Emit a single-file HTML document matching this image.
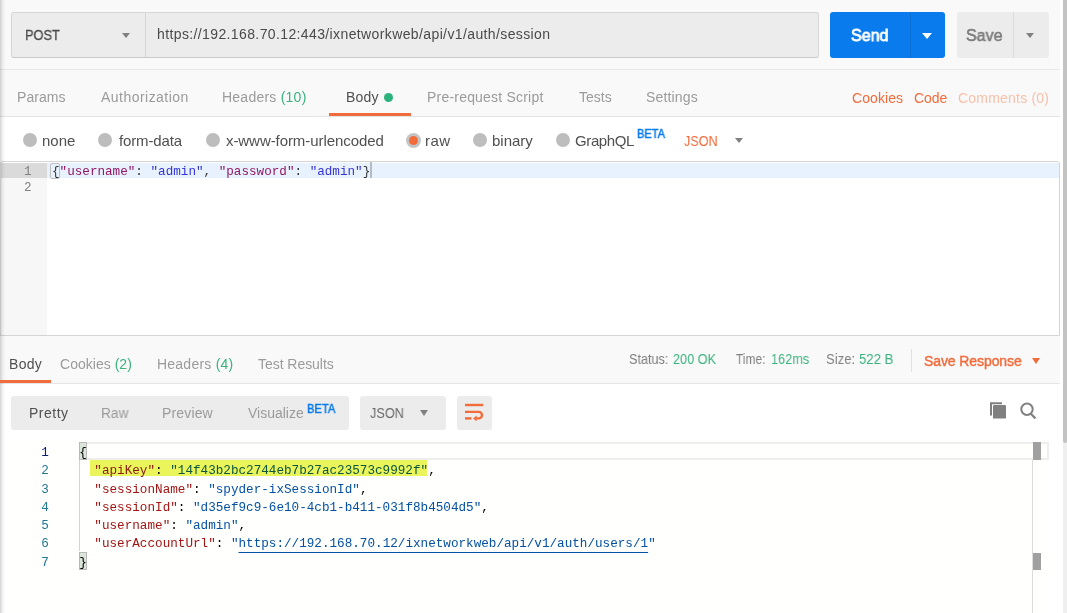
<!DOCTYPE html>
<html><head><meta charset="utf-8">
<style>
*{box-sizing:border-box}
html,body{margin:0;padding:0}
body{width:1067px;height:613px;overflow:hidden;position:relative;background:#fff;font-family:"Liberation Sans",sans-serif;}
.a{position:absolute}
.t{position:absolute;white-space:nowrap;line-height:1;will-change:transform}
.mono{font-family:"Liberation Mono",monospace}
</style></head><body>
<!-- top area bg -->
<div class="a" style="left:0;top:0;width:1060px;height:116px;background:#f9f9f9"></div>
<div class="a" style="left:0;top:69px;width:1060px;height:1px;background:#e8e8e8"></div>
<div class="a" style="left:0;top:116px;width:1060px;height:1px;background:#e5e5e5"></div>

<!-- method + url -->
<div class="a" style="left:11px;top:12px;width:808px;height:46px;background:#ececec;border:1px solid #d6d6d6;border-bottom-color:#c9c9c9;border-radius:3px"></div>
<div class="a" style="left:145px;top:13px;width:1px;height:44px;background:#d6d6d6"></div>
<div class="a" style="left:122px;top:33px;width:0;height:0;border-left:4.5px solid transparent;border-right:4.5px solid transparent;border-top:5px solid #808080"></div>

<!-- send -->
<div class="a" style="left:830px;top:12px;width:115px;height:46px;background:#097bed;border-radius:3px"></div>
<div class="a" style="left:910px;top:12px;width:1px;height:46px;background:#0a6fd3"></div>
<div class="a" style="left:921.5px;top:32.5px;width:0;height:0;border-left:5px solid transparent;border-right:5px solid transparent;border-top:6px solid #fff"></div>
<!-- save -->
<div class="a" style="left:957px;top:12px;width:92px;height:46px;background:#ececec;border-radius:3px"></div>
<div class="a" style="left:1013px;top:12px;width:1px;height:46px;background:#dcdcdc"></div>
<div class="a" style="left:1026px;top:33px;width:0;height:0;border-left:4px solid transparent;border-right:4px solid transparent;border-top:5px solid #808080"></div>

<!-- request tabs -->
<div class="a" style="left:384px;top:93px;width:9px;height:9px;border-radius:50%;background:#2cb27c"></div>
<div class="a" style="left:329px;top:113px;width:82px;height:3px;background:#f26b3a"></div>

<!-- radio row -->
<div class="a" style="left:23px;top:133px;width:14px;height:14px;border-radius:50%;background:#bdbdbd"></div>
<div class="a" style="left:98px;top:133px;width:14px;height:14px;border-radius:50%;background:#bdbdbd"></div>
<div class="a" style="left:206px;top:133px;width:14px;height:14px;border-radius:50%;background:#bdbdbd"></div>
<div class="a" style="left:406px;top:133px;width:15px;height:15px;border-radius:50%;background:#c4c4c4"></div>
<div class="a" style="left:409px;top:136px;width:9px;height:9px;border-radius:50%;background:#f26b3a"></div>
<div class="a" style="left:473px;top:133px;width:14px;height:14px;border-radius:50%;background:#bdbdbd"></div>
<div class="a" style="left:556px;top:133px;width:14px;height:14px;border-radius:50%;background:#bdbdbd"></div>
<div class="a" style="left:734.5px;top:137.5px;width:0;height:0;border-left:4.5px solid transparent;border-right:4.5px solid transparent;border-top:5px solid #808080"></div>

<!-- request editor -->
<div class="a" style="left:0;top:161px;width:1060px;height:175px;background:#fff;border:1px solid #d5d5d5;border-radius:3px 3px 0 0"></div>
<div class="a" style="left:1px;top:163px;width:46px;height:172px;background:#f7f7f7"></div>
<div class="a" style="left:1px;top:163px;width:46px;height:15px;background:#dadada"></div>
<div class="a" style="left:47px;top:163px;width:1012px;height:15px;background:#e8f2fe"></div>
<span class="t mono" style="left:24px;top:166px;color:#808080;font-size:12.6px">1</span>
<span class="t mono" style="left:24px;top:182px;color:#808080;font-size:12.6px">2</span>
<div class="a" style="left:50px;top:163px;width:10px;height:16px;border:1px solid #c0c0c0;border-radius:2px"></div>
<span class="t mono" style="left:52px;top:165.5px;font-size:12.64px;color:#333">{<span style="color:#921766">"username"</span>: <span style="color:#3434d8">"admin"</span>, <span style="color:#921766">"password"</span>: <span style="color:#3434d8">"admin"</span>}</span>
<div class="a" style="left:370px;top:162px;width:2px;height:16px;background:#b6bac4"></div>

<!-- response header -->
<div class="a" style="left:0;top:336px;width:1060px;height:47px;background:#f9f9f9"></div>
<div class="a" style="left:0;top:383px;width:1060px;height:1px;background:#e5e5e5"></div>
<div class="a" style="left:911px;top:349px;width:1px;height:23px;background:#e0e0e0"></div>
<div class="a" style="left:1032.4px;top:358px;width:0;height:0;border-left:4.6px solid transparent;border-right:4.6px solid transparent;border-top:6px solid #f26b3a"></div>

<!-- toolbar -->
<div class="a" style="left:11px;top:396px;width:338px;height:34px;background:#ececec;border-radius:3px"></div>
<div class="a" style="left:360px;top:396px;width:86px;height:34px;background:#ececec;border-radius:3px"></div>
<div class="a" style="left:420.3px;top:410.3px;width:0;height:0;border-left:4.65px solid transparent;border-right:4.65px solid transparent;border-top:6px solid #808080"></div>
<div class="a" style="left:457px;top:396px;width:35px;height:34px;background:#ececec;border-radius:3px"></div>
<svg class="a" style="left:457px;top:396px" width="35" height="34" viewBox="0 0 35 34">
  <g stroke="#f26b3a" stroke-width="2.4" fill="none">
    <line x1="8" y1="9" x2="26.2" y2="9"/>
    <path d="M8 15.9 H21.75 A3.25 3.25 0 0 1 21.75 22.4 H18.5"/>
    <line x1="8" y1="22.4" x2="14.5" y2="22.4"/>
  </g>
  <path d="M16 22.4 L19.6 19.6 L19.6 25.2 Z" fill="#f26b3a"/>
</svg>

<!-- copy/search icons -->
<svg class="a" style="left:985px;top:398px" width="60" height="26" viewBox="0 0 60 26">
  <path d="M6 17.4 V5.3 H17" stroke="#808080" stroke-width="2" fill="none"/>
  <rect x="8" y="7" width="13" height="13.6" rx="1.2" fill="#808080"/>
  <circle cx="42" cy="11.3" r="5.7" stroke="#808080" stroke-width="2" fill="none"/>
  <line x1="45.8" y1="15.8" x2="50.4" y2="20.4" stroke="#808080" stroke-width="2.2"/>
</svg>

<!-- response editor -->
<div class="a" style="left:11px;top:441px;width:1038px;height:172px;background:#fffffd"></div>
<div class="a" style="left:79px;top:442px;width:970px;height:18px;border:2px solid #eeeeee"></div>
<div class="a" style="left:79px;top:442px;width:8px;height:18px;background:#dbe6db;border:1px solid #b8b8b8"></div>
<div class="a" style="left:79px;top:552px;width:8px;height:18px;background:#dbe6db;border:1px solid #b8b8b8"></div>
<div class="a" style="left:79px;top:460px;width:1px;height:91px;background:#d3d3d3"></div>
<div class="a" style="left:90px;top:460px;width:337px;height:16px;background:#eaf55b"></div>
<div class="a" style="left:1032px;top:460px;width:1px;height:153px;background:#dcdcdc"></div>
<div class="a" style="left:1033px;top:442px;width:8px;height:18px;background:#a0a0a0"></div>
<div class="a" style="left:1033px;top:553px;width:8px;height:17px;background:#a0a0a0"></div>

<div class="a mono" style="left:0;top:0;width:1030px;height:613px;font-size:12.65px;line-height:18px;white-space:pre">
<div style="position:absolute;left:0;top:444.00px;width:48.8px;text-align:right;color:#0b216f">1</div>
<div style="position:absolute;left:79.2px;top:444.00px;color:#000">{</div>
<div style="position:absolute;left:0;top:462.28px;width:48.8px;text-align:right;color:#237893">2</div>
<div style="position:absolute;left:79.2px;top:462.28px;color:#000">  <span style="color:#8a1a10">"apiKey"</span>: <span style="color:#0a5440">"14f43b2bc2744eb7b27ac23573c9992f"</span>,</div>
<div style="position:absolute;left:0;top:480.56px;width:48.8px;text-align:right;color:#237893">3</div>
<div style="position:absolute;left:79.2px;top:480.56px;color:#000">  <span style="color:#a31515">"sessionName"</span>: <span style="color:#0451a5">"spyder-ixSessionId"</span>,</div>
<div style="position:absolute;left:0;top:498.84px;width:48.8px;text-align:right;color:#237893">4</div>
<div style="position:absolute;left:79.2px;top:498.84px;color:#000">  <span style="color:#a31515">"sessionId"</span>: <span style="color:#0451a5">"d35ef9c9-6e10-4cb1-b411-031f8b4504d5"</span>,</div>
<div style="position:absolute;left:0;top:517.12px;width:48.8px;text-align:right;color:#237893">5</div>
<div style="position:absolute;left:79.2px;top:517.12px;color:#000">  <span style="color:#a31515">"username"</span>: <span style="color:#0451a5">"admin"</span>,</div>
<div style="position:absolute;left:0;top:535.40px;width:48.8px;text-align:right;color:#237893">6</div>
<div style="position:absolute;left:79.2px;top:535.40px;color:#000">  <span style="color:#a31515">"userAccountUrl"</span>: <span style="color:#0451a5">"<span style="text-decoration:underline;text-underline-offset:4.5px;text-decoration-thickness:1px;text-decoration-skip-ink:none">https://192.168.70.12/ixnetworkweb/api/v1/auth/users/1</span>"</span></div>
<div style="position:absolute;left:0;top:553.68px;width:48.8px;text-align:right;color:#237893">7</div>
<div style="position:absolute;left:79.2px;top:553.68px;color:#000">}</div>
</div>

<span class="t" style="left:24.99px;top:28.00px;font-size:14px;font-weight:normal;color:#4a4a4a;transform:scaleX(0.9135);transform-origin:0 0;-webkit-text-stroke:0.3px #4a4a4a;">POST</span>
<span class="t" style="left:157.20px;top:27.00px;font-size:14px;font-weight:normal;color:#4a4a4a;letter-spacing:0.382px;">https://192.168.70.12:443/ixnetworkweb/api/v1/auth/session</span>
<span class="t" style="left:850.90px;top:27.00px;font-size:16.5px;font-weight:normal;color:#ffffff;transform:scaleX(0.9737);transform-origin:0 0;-webkit-text-stroke:0.8px #ffffff;">Send</span>
<span class="t" style="left:966.33px;top:27.00px;font-size:16.5px;font-weight:normal;color:#7a7a7a;transform:scaleX(0.9694);transform-origin:0 0;-webkit-text-stroke:0.55px #7a7a7a;">Save</span>
<span class="t" style="left:16.90px;top:90.00px;font-size:14px;font-weight:normal;color:#9b9b9b;letter-spacing:0.060px;">Params</span>
<span class="t" style="left:100.50px;top:90.00px;font-size:14px;font-weight:normal;color:#9b9b9b;letter-spacing:0.467px;">Authorization</span>
<span class="t" style="left:222.00px;top:90.00px;font-size:14px;font-weight:normal;color:#9b9b9b;letter-spacing:0.236px;">Headers <span style="color:#3ab37e">(10)</span></span>
<span class="t" style="left:345.50px;top:90.00px;font-size:14px;font-weight:normal;color:#505050;letter-spacing:0.167px;">Body</span>
<span class="t" style="left:427.20px;top:90.00px;font-size:14px;font-weight:normal;color:#9b9b9b;letter-spacing:0.206px;">Pre-request Script</span>
<span class="t" style="left:579.00px;top:90.00px;font-size:14px;font-weight:normal;color:#9b9b9b;">Tests</span>
<span class="t" style="left:646.00px;top:90.00px;font-size:14px;font-weight:normal;color:#9b9b9b;letter-spacing:0.171px;">Settings</span>
<span class="t" style="left:851.50px;top:91.00px;font-size:14px;font-weight:normal;color:#f26b3a;letter-spacing:0.083px;">Cookies</span>
<span class="t" style="left:913.60px;top:91.00px;font-size:14px;font-weight:normal;color:#f26b3a;letter-spacing:-0.067px;">Code</span>
<span class="t" style="left:957.70px;top:91.00px;font-size:14px;font-weight:normal;color:#f8c0a8;letter-spacing:0.209px;">Comments (0)</span>
<span class="t" style="left:42.10px;top:133.00px;font-size:15px;font-weight:normal;color:#505050;letter-spacing:-0.000px;">none</span>
<span class="t" style="left:119.40px;top:133.00px;font-size:15px;font-weight:normal;color:#505050;letter-spacing:-0.137px;">form-data</span>
<span class="t" style="left:225.70px;top:133.00px;font-size:15px;font-weight:normal;color:#505050;letter-spacing:-0.070px;">x-www-form-urlencoded</span>
<span class="t" style="left:425.00px;top:133.00px;font-size:15px;font-weight:normal;color:#505050;letter-spacing:0.500px;">raw</span>
<span class="t" style="left:492.00px;top:133.00px;font-size:15px;font-weight:normal;color:#505050;">binary</span>
<span class="t" style="left:575.40px;top:133.00px;font-size:15px;font-weight:normal;color:#505050;letter-spacing:-0.383px;">GraphQL</span>
<span class="t" style="left:637.38px;top:128.00px;font-size:12px;font-weight:normal;color:#097bed;transform:scaleX(0.9167);transform-origin:0 0;-webkit-text-stroke:0.5px #097bed;">BETA</span>
<span class="t" style="left:684.36px;top:133.00px;font-size:15px;font-weight:normal;color:#f26b3a;transform:scaleX(0.8395);transform-origin:0 0;">JSON</span>
<span class="t" style="left:8.80px;top:357.00px;font-size:14px;font-weight:normal;color:#505050;letter-spacing:0.300px;">Body</span>
<span class="t" style="left:60.30px;top:357.00px;font-size:14px;font-weight:normal;color:#9b9b9b;letter-spacing:0.020px;">Cookies <span style="color:#3ab37e">(2)</span></span>
<span class="t" style="left:156.70px;top:357.00px;font-size:14px;font-weight:normal;color:#9b9b9b;letter-spacing:0.230px;">Headers <span style="color:#3ab37e">(4)</span></span>
<span class="t" style="left:257.50px;top:357.00px;font-size:14px;font-weight:normal;color:#9b9b9b;letter-spacing:-0.045px;">Test Results</span>
<span class="t" style="left:628.83px;top:352.00px;font-size:14.5px;font-weight:normal;color:#808080;transform:scaleX(0.8721);transform-origin:0 0;">Status:</span>
<span class="t" style="left:672.92px;top:352.00px;font-size:14.5px;font-weight:normal;color:#3ab37e;transform:scaleX(0.8750);transform-origin:0 0;">200 OK</span>
<span class="t" style="left:735.50px;top:352.00px;font-size:14.5px;font-weight:normal;color:#808080;transform:scaleX(0.8257);transform-origin:0 0;">Time:</span>
<span class="t" style="left:770.52px;top:352.00px;font-size:14.5px;font-weight:normal;color:#3ab37e;transform:scaleX(0.8762);transform-origin:0 0;">162ms</span>
<span class="t" style="left:825.70px;top:352.00px;font-size:14.5px;font-weight:normal;color:#808080;transform:scaleX(0.9000);transform-origin:0 0;">Size:</span>
<span class="t" style="left:858.69px;top:352.00px;font-size:14.5px;font-weight:normal;color:#3ab37e;transform:scaleX(0.9056);transform-origin:0 0;">522 B</span>
<span class="t" style="left:923.60px;top:354.00px;font-size:14px;font-weight:normal;color:#f26b3a;letter-spacing:-0.092px;-webkit-text-stroke:0.4px #f26b3a;">Save Response</span>
<span class="t" style="left:28.50px;top:406.00px;font-size:14px;font-weight:normal;color:#505050;letter-spacing:0.500px;">Pretty</span>
<span class="t" style="left:100.62px;top:406.00px;font-size:14px;font-weight:normal;color:#9b9b9b;transform:scaleX(0.9778);transform-origin:0 0;">Raw</span>
<span class="t" style="left:162.30px;top:406.00px;font-size:14px;font-weight:normal;color:#9b9b9b;letter-spacing:0.150px;">Preview</span>
<span class="t" style="left:248.00px;top:406.00px;font-size:14px;font-weight:normal;color:#9b9b9b;letter-spacing:-0.013px;">Visualize</span>
<span class="t" style="left:306.81px;top:403.00px;font-size:12.5px;font-weight:normal;color:#097bed;transform:scaleX(0.8903);transform-origin:0 0;-webkit-text-stroke:0.5px #097bed;">BETA</span>
<span class="t" style="left:370.12px;top:406.00px;font-size:14.5px;font-weight:normal;color:#6a6a6a;transform:scaleX(0.8757);transform-origin:0 0;">JSON</span>

<!-- left shadow -->
<div class="a" style="left:0;top:0;width:6px;height:613px;background:linear-gradient(to right,rgba(0,0,0,0.17) 0px,rgba(0,0,0,0.12) 1px,rgba(0,0,0,0.06) 2.5px,rgba(0,0,0,0.02) 4px,rgba(0,0,0,0) 6px)"></div>
<div class="a" style="left:0;top:163px;width:1px;height:171px;background:#c4c4c4"></div>
<div class="a" style="left:0;top:380px;width:51px;height:3px;background:#f26b3a"></div>
<!-- right scrollbar -->
<div class="a" style="left:1060px;top:0;width:3px;height:613px;background:#fff"></div>
<div class="a" style="left:1063px;top:0;width:4px;height:613px;background:#efefef"></div>
<div class="a" style="left:1063px;top:0;width:4px;height:443px;background:#c3c3c3;border-radius:0 0 2px 2px"></div>
</body></html>
